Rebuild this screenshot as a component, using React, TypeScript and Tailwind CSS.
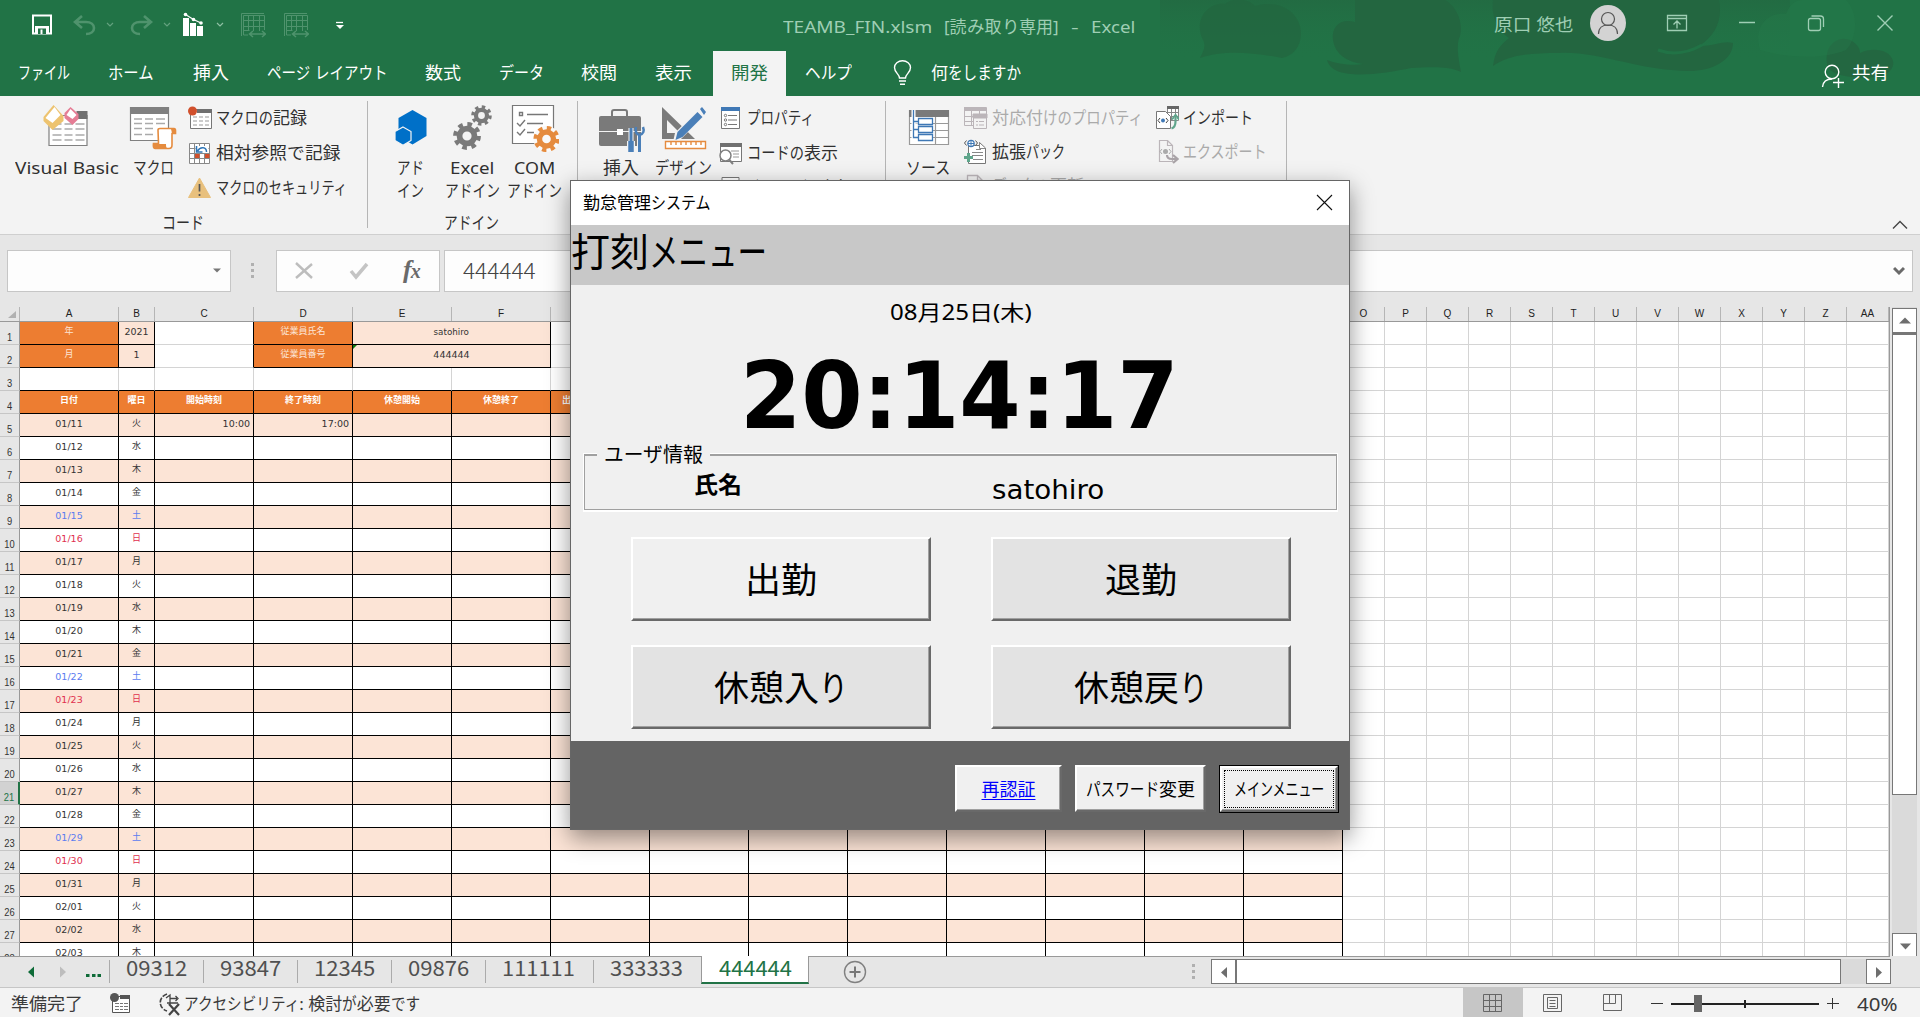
import { useLayoutEffect, useRef, useState, type ReactNode } from "react";

const kanaRun = /([\u3040-\u30ff]+)/;
const isKana = /^[\u3040-\u30ff]/;

/*
 * Single-line label set to an exact width. Kana are condensed and kanji keep
 * their full width; labels without kana are scaled as a whole.
 */
function Fit({ w, c = "", children }: { w: number; c?: string; children: ReactNode }) {
  const ref = useRef<HTMLSpanElement>(null);
  const runs: ReactNode[] = typeof children === "string" ? children.split(kanaRun).filter((r) => r !== "") : [children];
  const [fit, setFit] = useState<{ s: number; w: number }[]>([]);
  useLayoutEffect(() => {
    if (!ref.current) return;
    const widths = Array.from(ref.current.children).map((e) => (e.firstElementChild as HTMLElement).offsetWidth);
    const kana = runs.map((r) => typeof r === "string" && isKana.test(r));
    const total = widths.reduce((a, b) => a + b, 0);
    const kanaTotal = widths.reduce((a, b, i) => a + (kana[i] ? b : 0), 0);
    const ks = kanaTotal > 0 ? (w - (total - kanaTotal)) / kanaTotal : 0;
    const split = ks > 0.6 && ks < 1.15;
    setFit(
      widths.map((n, i) => {
        const s = split ? (kana[i] ? ks : 1) : w / total;
        return { s, w: n * s };
      }),
    );
  }, [w]);
  return (
    <span className={"block shrink-0 whitespace-nowrap " + c} style={{ width: w }}>
      <span ref={ref} className="flex">
        {runs.map((r, i) => (
          <span key={i} className="block shrink-0" style={{ width: fit[i]?.w }}>
            <span className="inline-block origin-left whitespace-pre align-top" style={{ transform: `scaleX(${fit[i]?.s ?? 1})` }}>
              {r}
            </span>
          </span>
        ))}
      </span>
    </span>
  );
}

function Pic({ x, y, w, h, c = "", children }: { x: number; y: number; w: number; h: number; c?: string; children: ReactNode }) {
  return (
    <svg className={"block shrink-0 " + c} width={w} height={h} viewBox={`${x} ${y} ${w} ${h}`} fill="none">
      {children}
    </svg>
  );
}

function Gear({ x, y, r, color }: { x: number; y: number; r: number; color: string }) {
  const seg = (2 * Math.PI * r) / 16;
  return (
    <g stroke={color} fill="none">
      <circle cx={x} cy={y} r={r * 0.65} strokeWidth={r * 0.5} />
      <circle cx={x} cy={y} r={r} strokeWidth={r * 0.42} strokeDasharray={`${seg} ${seg}`} />
    </g>
  );
}

function Chev({ c = "" }: { c?: string }) {
  return (
    <Pic x={0} y={0} w={8} h={6} c={c}>
      <path d="M1 1l3 3 3-3" stroke="#8fc0a4" strokeWidth="1.2" />
    </Pic>
  );
}

function TitleBar() {
  return (
    <div className="flex h-[51px] items-start">
      <Pic x={31} y={14} w={20} h={21} c="ml-[32px] mt-[14px]">
        <path d="M32 15.500h18v18H32z" stroke="#fff" strokeWidth="2" />
        <path d="M34 26h14v7H34z" fill="#fff" />
        <path d="M37 28.500h8V34h-8z" fill="#217346" />
        <path d="M39.500 29.500h2V34h-2z" fill="#fff" />
      </Pic>
      <Pic x={73} y={14} w={24} h={22} c="ml-[21px] mt-[14px]">
        <path d="M82 16l-7 6 7 6M76 22h10c5 0 8 2.500 8 6s-3 6-8 6" stroke="#4f936d" strokeWidth="2.600" />
      </Pic>
      <Chev c="ml-[9px] mt-[22px] opacity-60" />
      <Pic x={129} y={14} w={24} h={22} c="ml-[15px] mt-[14px]">
        <path d="M144 16l7 6-7 6M150 22h-10c-5 0-8 2.500-8 6s3 6 8 6" stroke="#4f936d" strokeWidth="2.600" />
      </Pic>
      <Chev c="ml-[10px] mt-[22px] opacity-60" />
      <Pic x={182} y={12} w={22} h={25} c="ml-[11px] mt-[12px]">
        <path d="M183 18h6v18h-6zM190 23h6v13h-6zM197 26h6v10h-6z" fill="#fff" />
        <path d="M185.500 14.500l8 5 7.500 3.500" stroke="#fff" strokeWidth="1.200" />
        <circle cx="185.500" cy="14.500" r="1.800" fill="#fff" />
        <circle cx="193.500" cy="19.500" r="1.800" fill="#fff" />
        <circle cx="201" cy="23" r="1.800" fill="#fff" />
      </Pic>
      <Chev c="ml-[12px] mt-[22px]" />
      {[0, 1].map((i) => (
        <Pic key={i} x={240} y={12} w={26} h={26} c={i ? "ml-[17px] mt-[12px]" : "ml-[16px] mt-[12px]"}>
          <g stroke="#4f936d" strokeWidth="1">
            <path d="M241.500 36V13.500H264M243.500 15.500h21V30M243.500 15.500V35H248M248.500 15.500V31M253.500 15.500V31M259.500 15.500V31M243.500 20.500h21M243.500 26.500h21M243.500 30.500h6" />
            <path d="M250 34h15M253 31l-3.500 3 3.500 3M262 31l3.500 3-3.500 3" strokeWidth="1.500" />
          </g>
        </Pic>
      ))}
      <Pic x={335} y={20} w={10} h={10} c="ml-[26px] mt-[20px]">
        <path d="M336 22.500h7" stroke="#fff" strokeWidth="1.300" />
        <path d="M336 25h8l-4 4z" fill="#fff" />
      </Pic>
      <div className="ml-[438px] mt-[14px] flex text-[17px] leading-[26px] text-[#9fceb4]">
        <Fit w={149}>TEAMB_FIN.xlsm</Fit>
        <Fit w={115} c="ml-[12px]">[読み取り専用]</Fit>
        <Fit w={7} c="ml-[12px]">-</Fit>
        <Fit w={44} c="ml-[13px]">Excel</Fit>
      </div>
      <Fit w={79} c="ml-[359px] mt-[12px] text-[17px] leading-[26px] text-[#9fceb4]">原口 悠也</Fit>
      <Pic x={1590} y={5} w={36} h={36} c="ml-[17px] mt-[5px]">
        <circle cx="1608" cy="23" r="18" fill="#d3d3d3" />
        <circle cx="1608" cy="19" r="6.500" stroke="#555" strokeWidth="1.200" />
        <path d="M1598.500 34c0-6 4-9 9.500-9s9.500 3 9.500 9" stroke="#555" strokeWidth="1.200" />
      </Pic>
      <Pic x={1666} y={14} w={22} h={18} c="ml-[40px] mt-[14px]">
        <path d="M1667.500 15.500h19v15h-19zM1667.500 18.500h19M1677 28.500v-7.500M1673.500 24.500l3.500-3.500 3.500 3.500" stroke="#9fceb4" strokeWidth="1.300" />
      </Pic>
      <Pic x={1739} y={14} w={16} h={18} c="ml-[51px] mt-[14px]">
        <path d="M1739 22.500h16" stroke="#9fceb4" strokeWidth="1.500" />
      </Pic>
      <Pic x={1807} y={14} w={18} h={18} c="ml-[52px] mt-[14px]">
        <rect x="1808.500" y="18.500" width="12" height="12" rx="2" stroke="#9fceb4" strokeWidth="1.300" />
        <path d="M1811.500 16h9c2 0 3 1 3 3v8" stroke="#9fceb4" strokeWidth="1.300" />
      </Pic>
      <Pic x={1876} y={14} w={18} h={18} c="ml-[51px] mt-[14px]">
        <path d="M1877.500 15.500l15 15M1892.500 15.500l-15 15" stroke="#9fceb4" strokeWidth="1.400" />
      </Pic>
    </div>
  );
}

function Tabs() {
  return (
    <div className="flex h-[45px] text-[17px] leading-[44px] text-white">
      <Fit w={52} c="ml-[18px]">ファイル</Fit>
      <Fit w={46} c="ml-[38px]">ホーム</Fit>
      <Fit w={36} c="ml-[39px]">挿入</Fit>
      <Fit w={120} c="ml-[38px]">ページ レイアウト</Fit>
      <Fit w={36} c="ml-[38px]">数式</Fit>
      <Fit w={45} c="ml-[38px]">データ</Fit>
      <Fit w={36} c="ml-[37px]">校閲</Fit>
      <Fit w={37} c="ml-[38px]">表示</Fit>
      <div className="ml-[21px] flex w-[73px] justify-center bg-[#f3f3f3] text-[#217346]">
        <Fit w={37}>開発</Fit>
      </div>
      <Fit w={47} c="ml-[19px]">ヘルプ</Fit>
      <Pic x={893} y={60} w={20} h={26} c="ml-[41px] mt-[9px]">
        <path d="M899.500 78c0-4-5-5-5-10.500a8 6.800 0 0 1 16 0c0 5.500-5 6.500-5 10.500z" stroke="#fff" strokeWidth="1.400" />
        <path d="M899 81h7M900 84.300h5" stroke="#fff" strokeWidth="1.400" />
      </Pic>
      <Fit w={90} c="ml-[18px]">何をしますか</Fit>
      <Pic x={1821} y={64} w={24} h={25} c="ml-[800px] mt-[13px]">
        <circle cx="1832" cy="72" r="6.800" stroke="#fff" strokeWidth="1.400" />
        <path d="M1822.500 87c.5-5 4-8 9.500-8M1838.500 78v10M1833 82.500h11" stroke="#fff" strokeWidth="1.400" />
      </Pic>
      <Fit w={37} c="ml-[7px]">共有</Fit>
    </div>
  );
}

function Header() {
  return (
    <header className="relative h-[96px] shrink-0 bg-[#217346]">
      <svg className="absolute left-0 top-0" width="1920" height="96" viewBox="0 0 1920 96">
        <defs>
          <linearGradient id="hz" x1="0" x2="0" y1="0" y2="1">
            <stop offset="0" stopColor="#236640" stopOpacity=".6" />
            <stop offset="1" stopColor="#217346" stopOpacity="0" />
          </linearGradient>
        </defs>
        <path d="M1160 0H1790V60H1160z" fill="url(#hz)" />
        <g fill="#236640">
          <path d="M1200 58c4-8 6-12 3-18-10-20 5-38 22-36 10-8 25-4 30 2 20-6 40 2 45 20 4 18-6 30-18 32-30-6-60-8-82 0z" opacity=".8" />
          <path d="M1333 40c-2-14 8-22 22-18V0h90c14 8 18 26 15 36-4 8-2 20 1 36-12-6-30-5-50-4-30 6-78 14-84-8 10 4 26 6 36 4-16-2-28-10-30-24z" />
          <path d="M1493 66c2-14 6-20 16-28-12-8-18-22-16-38h226c4 20-4 36-20 46 14 0 26-6 34-3 0 18-22 28-44 28-50 0-90-20-130-18-30 0-50 2-66 13z" />
          <path d="M1828 67c-6-20 10-34 24-26 6 4 8 8 8 12 12-6 30-4 33 8 2 8-6 14-16 16-18 2-44 0-49-10z" opacity=".9" />
        </g>
        <path d="M1658 50c14 5 30 3 44-5" stroke="#217346" strokeWidth="3" fill="none" />
        <path d="M1760 50c-6-20 4-38 26-36 4-10 10-14 16-14h44c14 14 10 40 0 50-24 10-60 8-86 0z" fill="#267a4c" opacity=".4" />
      </svg>
      <div className="relative">
        <TitleBar />
        <Tabs />
      </div>
    </header>
  );
}

function Big({ c, icon, lines }: { c: string; icon: ReactNode; lines: [string, number][] }) {
  return (
    <div className={"flex shrink-0 flex-col items-center pt-[8px] leading-[23px] " + c}>
      {icon}
      <div className="mt-[4px] flex flex-col items-center">
        {lines.map(([t, w]) => (
          <Fit key={t} w={w}>{t}</Fit>
        ))}
      </div>
    </div>
  );
}

function Small({ icon, text, w, c }: { icon: ReactNode; text: string; w: number; c: string }) {
  return (
    <div className={"flex items-center " + c}>
      <div className="flex w-[24px] shrink-0 justify-center">{icon}</div>
      <Fit w={w} c="ml-[4px]">{text}</Fit>
    </div>
  );
}

function Sep() {
  return <div className="mt-[5px] h-[127px] w-px shrink-0 bg-[#b5b5b5]" />;
}

function Ribbon() {
  return (
    <div className="flex h-[139px] shrink-0 border-b border-[#cfcfcf] bg-[#f3f3f3] text-[17px] text-[#303030]">
      <div className="flex w-[367px] shrink-0 flex-col">
        <div className="flex h-[115px]">
          <Big
            c="ml-[5px] w-[123px]"
            lines={[["Visual Basic", 104]]}
            icon={
              <Pic x={41.5} y={104} w={50} h={48}>
                <path d="M48.500 115.500h38v30h-38z" fill="#fff" stroke="#808080" strokeWidth="1.200" />
                <path d="M76 111h11v8H76z" fill="#707070" />
                <path d="M52 124h9M64 124h8M75 124h9M52 129h9M64 129h8M75 129h9M52 135h9M64 135h8M75 135h9M52 140h9M64 140h8M75 140h9" stroke="#aaa" strokeWidth="1.300" />
                <path d="M53 105l10 11v5l-11 9-9-9v-4z" fill="#edc36f" />
                <path d="M54 107l6 8-8 8-7-5z" fill="#fff" />
                <path d="M70 107l8 7v5l-6 6-8-7v-5z" fill="#e57d95" />
                <path d="M70 109l6 6-4 4-6-4z" fill="#fff" />
              </Pic>
            }
          />
          <Big
            c="w-[50px]"
            lines={[["マクロ", 41]]}
            icon={
              <Pic x={128} y={104} w={50} h={48}>
                <path d="M130.500 107.500h38v33h-38z" fill="#fff" stroke="#808080" strokeWidth="1.200" />
                <path d="M130 107h39v7h-39z" fill="#808080" />
                <path d="M134 119h8M145 119h8M156 119h9M134 123.500h8M145 123.500h8M156 123.500h9M134 128.500h8M145 128.500h8M134 134.500h8M145 134.500h8" stroke="#aaa" strokeWidth="1.300" />
                <path d="M158 130c0-1 1-1.500 2-1.500h14c1 0 1.500 1 1.500 2v3H172V145c0 2-1 3.500-3 3.500h-14c-1.500 0-2-2-1.500-5h5z" fill="#fff" stroke="#e58b3e" strokeWidth="1.600" />
                <path d="M154 144h12c0 2 0 4 2 5h-12c-2 0-3-3-2-5zM171 129h4v4h-3z" fill="#e58b3e" />
              </Pic>
            }
          />
          <div className="ml-[10px] mt-[4px] flex flex-col">
            <Small
              c="h-[35px]" text="マクロの記録" w={91}
              icon={
                <Pic x={0} y={0} w={24} h={24}>
                  <path d="M2.500 3.500h21v19h-21z" fill="#fff" stroke="#777" />
                  <path d="M9 3h15v4H9z" fill="#707070" />
                  <path d="M5 11h4M11 11h4M17 11h4M5 15h4M11 15h4M17 15h4M5 19h4M11 19h4M17 19h4" stroke="#999" />
                  <circle cx="4.500" cy="5" r="4.500" fill="#d1502c" />
                </Pic>
              }
            />
            <Small
              c="h-[35px]" text="相対参照で記録" w={124}
              icon={
                <Pic x={1} y={0} w={24} h={24}>
                  <path d="M2.500 2.500h20v20h-20zM7.500 2.500v20M12.500 2.500v20M17.500 2.500v20M2.500 7.500h20M2.500 12.500h20M2.500 17.500h20" fill="#fff" stroke="#888" />
                  <path d="M8.500 5h13v7h-13z" fill="#fff" />
                  <path d="M8 13h4.500v4H8zM18 13h4.500v4H18z" fill="#d1502c" />
                  <path d="M19.500 11c0-5-6-6-9-1M9.500 5v6h6" stroke="#2e75b6" strokeWidth="1.500" />
                </Pic>
              }
            />
            <Small
              c="h-[35px]" text="マクロのセキュリティ" w={131}
              icon={
                <Pic x={0} y={0} w={24} h={24}>
                  <path d="M11.500 2l11 19.500H.5z" fill="#e8c07d" stroke="#e8c07d" strokeLinejoin="round" />
                  <path d="M11.500 8v7.500M11.500 18v2" stroke="#555" strokeWidth="1.700" />
                </Pic>
              }
            />
          </div>
        </div>
        <Fit w={42} c="ml-[162px] leading-[23px]">コード</Fit>
      </div>
      <Sep />
      <div className="flex w-[209px] shrink-0 flex-col">
        <div className="ml-[12px] flex h-[115px]">
          <Big
            c="w-[61px]"
            lines={[["アド", 27], ["イン", 27]]}
            icon={
              <Pic x={386} y={104} w={50} h={48}>
                <path d="M412.500 110l14 8v18l-14 8.500-14-8.500v-18z" fill="#0070c8" />
                <path d="M403 127l8 4.500v9l-8 4.800-8-4.800v-9z" fill="#0070c8" stroke="#f3f3f3" strokeWidth="1.200" />
              </Pic>
            }
          />
          <Big
            c="w-[62px]"
            lines={[["Excel", 44], ["アドイン", 55]]}
            icon={
              <Pic x={447} y={104} w={50} h={48}>
                <Gear x={467} y={136} r={11.5} color="#7a7a7a" />
                <Gear x={481.5} y={115.5} r={8.5} color="#7a7a7a" />
              </Pic>
            }
          />
          <Big
            c="w-[62px]"
            lines={[["COM", 41], ["アドイン", 55]]}
            icon={
              <Pic x={509} y={104} w={50} h={48}>
                <path d="M512.500 105.500h41v38h-41z" fill="#fff" stroke="#777" strokeWidth="1.200" />
                <path d="M519.500 112.500h3v3h-3zM527 114.500h21M527 123.500h16M527 132.500h7M517 123l3 3 5-6M517 132l3 3 5-6" stroke="#777" strokeWidth="1.400" />
                <circle cx="546.500" cy="139" r="13" fill="#f9f9f9" />
                <Gear x={546.5} y={139} r={10.8} color="#e58b3e" />
              </Pic>
            }
          />
        </div>
        <Fit w={55} c="ml-[76px] leading-[23px]">アドイン</Fit>
      </div>
      <Sep />
      <div className="flex w-[307px] shrink-0">
        <Big
          c="ml-[12px] w-[62px]"
          lines={[["挿入", 36]]}
          icon={
            <Pic x={597} y={104} w={50} h={48}>
              <path d="M613 116v-4c0-1.500 1-2 2-2h11c1 0 2 .5 2 2v4" stroke="#7a7a7a" strokeWidth="2" />
              <rect x="600" y="116" width="42" height="30" rx="2" fill="#7a7a7a" />
              <path d="M600 131.500h42" stroke="#f3f3f3" />
              <path d="M618 129h6v6h-6z" fill="#fff" />
              <path d="M632 128v14M640.500 135v17" stroke="#f3f3f3" strokeWidth="5" />
              <path d="M632 141v11" stroke="#f3f3f3" strokeWidth="8" />
              <path d="M632 128v14M640.500 135v17" stroke="#4a7fb8" strokeWidth="3" />
              <path d="M632 141v11" stroke="#4a7fb8" strokeWidth="5.500" />
              <path d="M637 127c-1 4 0 7 3.500 8 4-1 5-4 3.500-8" stroke="#4a7fb8" strokeWidth="2.500" />
            </Pic>
          }
        />
        <Big
          c="w-[62px]"
          lines={[["デザイン", 57]]}
          icon={
            <Pic x={658} y={104} w={50} h={48}>
              <path d="M662 107l33 32h-33zm5 13v13h13z" fill="#7a7a7a" fillRule="evenodd" />
              <path d="M699 108l7 6-25 25-8 3 2-9z" fill="#f3f3f3" />
              <path d="M697.500 112l5 5-20 20-7 3 2-8zM700 109l2-2 4 5-2 3z" fill="#4a7fb8" />
              <path d="M665.500 141.500h40v7h-40zM671 142v3M676 142v3M681 142v3M686 142v3M691 142v3M696 142v3M701 142v3" fill="#fff" stroke="#e58b3e" strokeWidth="1.400" />
            </Pic>
          }
        />
        <div className="ml-[5px] mt-[4px] flex flex-col">
          <Small
            c="h-[35px]" text="プロパティ" w={67}
            icon={
              <Pic x={0} y={0} w={20} h={24}>
                <path d="M.5 1.500h18v21H.5z" fill="#fff" stroke="#777" />
                <path d="M0 1h19v4H0z" fill="#3f78b5" />
                <circle cx="4.500" cy="9.500" r="1.200" stroke="#777" />
                <circle cx="4.500" cy="14" r="1.200" stroke="#777" />
                <circle cx="4.500" cy="18.500" r="1.200" stroke="#777" />
                <path d="M7 9.500h9M7 14h9M7 18.500h9" stroke="#777" />
              </Pic>
            }
          />
          <Small
            c="h-[35px]" text="コードの表示" w={91}
            icon={
              <Pic x={0} y={0} w={24} h={24}>
                <path d="M1.500 2.500h21v18h-21z" fill="#fff" stroke="#777" />
                <path d="M1 2h22v4H1z" fill="#707070" />
                <path d="M12 10h8M14 13h6M14 16h6" stroke="#999" />
                <circle cx="6.500" cy="14.500" r="5.500" fill="#fff" stroke="#808080" strokeWidth="1.500" />
                <path d="M10 18.500l4 4.500" stroke="#808080" strokeWidth="2" />
              </Pic>
            }
          />
          <Small
            c="h-[35px]" text="ダイアログの実行" w={106}
            icon={
              <Pic x={0} y={0} w={20} h={24}>
                <path d="M1 1.500h17v20H1zM7 6h5M9.500 4v5" fill="#fff" stroke="#777" />
              </Pic>
            }
          />
        </div>
      </div>
      <Sep />
      <div className="flex w-[400px] shrink-0">
        <Big
          c="ml-[12px] w-[60px]"
          lines={[["ソース", 44]]}
          icon={
            <Pic x={903} y={104} w={50} h={48}>
              <path d="M909.500 110.500h39v34h-39zM909.500 123.500h39M909.500 130.500h39M909.500 137.500h39M935.500 116v28" fill="#fff" stroke="#999" strokeWidth="1.200" />
              <path d="M909 110h40v7h-40z" fill="#7a7a7a" />
              <path d="M913.500 110v31.500h5M913.500 121.500h5M913.500 129.500h5" stroke="#fff" strokeWidth="4" />
              <path d="M913.500 110v27.500h5M913.500 121.500h5M913.500 129.500h5" stroke="#3f78b5" strokeWidth="1.300" />
              <path d="M918.500 118.500h14v6h-14zM918.500 126.500h14v6h-14zM918.500 134.500h14v6h-14z" fill="#fff" stroke="#3f78b5" strokeWidth="1.300" />
            </Pic>
          }
        />
        <div className="ml-[6px] mt-[5px] flex w-[191px] flex-col">
          <Small
            c="h-[34px] text-[#aaa]" text="対応付けのプロパティ" w={151}
            icon={
              <Pic x={0} y={0} w={24} h={24}>
                <path d="M.5 1.500h22v18H.5zM.5 10.500h22M.5 15.500h22M7.500 5v14M15.500 5v14" stroke="#bbb5b9" />
                <path d="M0 1h22v4H0z" fill="#bbb5b9" />
                <path d="M9.500 8.500h13v14h-13z" fill="#f3f3f3" stroke="#bbb5b9" />
                <path d="M9 8h14v4H9zM12 15.500h2M15 15.500h5M12 19h2M15 19h5" fill="#bbb5b9" stroke="#bbb5b9" />
              </Pic>
            }
          />
          <Small
            c="h-[34px]" text="拡張パック" w={73}
            icon={
              <Pic x={0} y={0} w={24} h={26}>
                <path d="M4.500 6.500h11V3.500l6 5.500v15.500h-17z" fill="#fff" stroke="#777" />
                <path d="M15.500 3.500v6h6M12 10.500h5M8 13.500h11M8 16.500h11M9 20.500h10" stroke="#888" />
                <path d="M2.500 1.500l-2 2.500 2 2.500M11.500 1.500l2 2.500-2 2.500" stroke="#555" />
                <circle cx="7" cy="4.500" r="3.200" fill="#fff" stroke="#3f78b5" strokeWidth="1.200" />
                <path d="M4 4.500h6M7 1.500v6" stroke="#3f78b5" />
                <path d="M0 18.500h9M4.500 14v9" stroke="#5fa58b" strokeWidth="3" />
              </Pic>
            }
          />
          <Small
            c="h-[34px] text-[#aaa]" text="データの更新" w={92}
            icon={
              <Pic x={0} y={0} w={24} h={24}>
                <path d="M3.500 1.500h10l5 5v15h-15zM13.500 1.500v5h5M20.500 6v12" stroke="#bbb5b9" strokeWidth="1.300" />
              </Pic>
            }
          />
        </div>
        <div className="mt-[5px] flex flex-col">
          <Small
            c="h-[34px]" text="インポート" w={70}
            icon={
              <Pic x={-1} y={0} w={24} h={24}>
                <path d="M11.500 1.500h11v13h-11zM15.500 1.500v13M19.500 1.500v13M11.500 6.500h11M11.500 10.500h11" fill="#fff" stroke="#888" />
                <path d="M11 0h12v3H11z" fill="#666" />
                <path d="M.5 5.500h9l5 5v12H.5z" fill="#fff" stroke="#777" />
                <path d="M4 12l-2 2.500 2 2.500M10 12l2 2.500-2 2.500" stroke="#444" />
                <circle cx="7" cy="14.500" r="2" fill="#3f78b5" />
                <path d="M15.500 22.500c3-1 4-3 4-7v-4" stroke="#5fa58b" strokeWidth="2.200" />
                <path d="M16 13.500l3.500-4.500 3.500 4.500" stroke="#5fa58b" strokeWidth="2" />
              </Pic>
            }
          />
          <Small
            c="h-[34px] text-[#aaa]" text="エクスポート" w={84}
            icon={
              <Pic x={0} y={0} w={24} h={24}>
                <path d="M4.500.5h8l5 5v16h-13zM12.500.5v5h5" stroke="#bbb5b9" strokeWidth="1.200" />
                <path d="M7 9l-2 2.500L7 14M14 9l2 2.500-2 2.500" stroke="#aaa" />
                <circle cx="10.500" cy="11.500" r="2.500" fill="#aaa" />
                <path d="M12 15c0 3 2 4 5 4h4M18 15l4.500 4-4.500 4" stroke="#a9a3a7" strokeWidth="2.200" />
              </Pic>
            }
          />
        </div>
      </div>
      <Sep />
      <Pic x={0} y={0} w={18} h={12} c="ml-[604px] mt-[123px]">
        <path d="M2 9.500l7-7 7 7" stroke="#444" strokeWidth="1.400" />
      </Pic>
    </div>
  );
}

function Dots({ c }: { c: string }) {
  return (
    <div className={"flex shrink-0 flex-col gap-[3px] " + c}>
      <div className="size-[3px] bg-[#b0b0b0]" />
      <div className="size-[3px] bg-[#b0b0b0]" />
      <div className="size-[3px] bg-[#b0b0b0]" />
    </div>
  );
}

function FormulaBar() {
  return (
    <div className="flex h-[72px] shrink-0 bg-[#e6e6e6] pt-[15px]">
      <div className="ml-[7px] flex h-[42px] w-[224px] items-center justify-end border border-[#c6c6c6] bg-[#fdfdfd] pr-[9px]">
        <Pic x={0} y={0} w={8} h={6}>
          <path d="M0 .5h8l-4 4z" fill="#777" />
        </Pic>
      </div>
      <Dots c="ml-[20px] mt-[13px]" />
      <div className="ml-[22px] flex h-[42px] w-[164px] items-center border border-[#c6c6c6] bg-[#fdfdfd]">
        <Pic x={0} y={0} w={20} h={18} c="ml-[17px]">
          <path d="M2 1l16 15M18 2L2 16" stroke="#bdbdbd" strokeWidth="2.400" />
        </Pic>
        <Pic x={0} y={0} w={20} h={18} c="ml-[35px]">
          <path d="M2 9l5 6L18 2" stroke="#c4c4c4" strokeWidth="3.500" />
        </Pic>
        <span className="ml-[34px] whitespace-nowrap pb-[3px] font-['Liberation_Serif',serif] text-[26px] font-bold italic leading-none tracking-[-1px] text-[#6a6a6a]">
          f<span className="text-[20px]">x</span>
        </span>
      </div>
      <div className="ml-[4px] flex h-[42px] w-[1469px] items-center border border-[#c6c6c6] bg-[#fdfdfd]">
        <Fit w={73} c="ml-[18px] flex-none pb-[4px] font-['Noto_Sans_CJK_JP',sans-serif] text-[22px] font-light leading-[34px] text-[#444]">444444</Fit>
        <Pic x={0} y={0} w={12} h={10} c="ml-auto mr-[7px]">
          <path d="M1 2l5 5 5-5" stroke="#6a6a6a" strokeWidth="3" />
        </Pic>
      </div>
    </div>
  );
}

const letters = ["A", "B", "C", "D", "E", "F", "G", "H", "I", "J", "K", "L", "M", "N"];
const tailLetters = ["O", "P", "Q", "R", "S", "T", "U", "V", "W", "X", "Y", "Z", "AA"];
const week = ["火", "水", "木", "金", "土", "日", "月"];
const wide = [2, 3, 4, 5, 6, 7, 8, 9, 10, 11, 12, 13];
const headings = ["開始時刻", "終了時刻", "休憩開始", "休憩終了"];
const days = Array.from({ length: 24 }, (_, i) => {
  const d = 11 + i;
  return { date: d > 31 ? "02/0" + (d - 31) : "01/" + d, day: week[i % 7] };
});

const B = "border-b border-r border-black ";
const G = "border-b border-r border-[#d4d4d4] ";

function Cell({ c, children }: { c: string; children?: ReactNode }) {
  return <div className={"h-[23px] shrink-0 overflow-hidden whitespace-nowrap text-center leading-[19px] " + c}>{children}</div>;
}

function Row({ n, children }: { n: number; children: ReactNode }) {
  return (
    <div className="flex h-[23px] shrink-0">
      <div
        className={
          n === 21
            ? "w-[20px] shrink-0 overflow-hidden border-b border-r-2 border-b-[#c0c0c0] border-r-[#217346] bg-[#d2d2d2] pt-[5px] text-center text-[11px] text-[#217346]"
            : "w-[20px] shrink-0 overflow-hidden border-b border-r border-b-[#c6c6c6] border-r-[#999] bg-[#e6e6e6] pt-[5px] text-center text-[11px] text-[#333]"
        }
      >
        <span className="block scale-x-85 font-['Liberation_Sans',sans-serif] leading-[20px]">{n}</span>
      </div>
      {children}
    </div>
  );
}

function Tail() {
  return tailLetters.map((l) => <Cell key={l} c={G + "w-[42px]"} />);
}

function Sheet() {
  return (
    <div className="flex w-[1890px] shrink-0 flex-col overflow-hidden border-r border-[#999] bg-white font-['DejaVu_Sans','Noto_Sans_CJK_JP',sans-serif] text-[9.5px] text-[#333]">
      <div className="flex h-[15px] shrink-0 border-b border-[#999] bg-[#e6e6e6] font-['Liberation_Sans',sans-serif] text-[10px] leading-[14px] text-[#222]">
        <div className="flex w-[20px] shrink-0 justify-end border-r border-[#b5b5b5] pr-[3px] pt-[4px]">
          <Pic x={0} y={0} w={8} h={8}>
            <path d="M8 0v7H0z" fill="#b1b1b1" />
          </Pic>
        </div>
        {letters.map((l) => (
          <div key={l} className={l === "B" ? "w-[36px] shrink-0 border-r border-[#b5b5b5] text-center" : "w-[99px] shrink-0 border-r border-[#b5b5b5] text-center"}>{l}</div>
        ))}
        {tailLetters.map((l) => (
          <div key={l} className="w-[42px] shrink-0 border-r border-[#b5b5b5] text-center">{l}</div>
        ))}
      </div>
      {[
        ["年", "2021", "従業員氏名", "satohiro"],
        ["月", "1", "従業員番号", "444444"],
      ].map((r, i) => (
        <Row key={i} n={i + 1}>
          <Cell c={B + "w-[99px] bg-[#ed7d31] text-[9px] text-[#fce4d6]"}>{r[0]}</Cell>
          <Cell c={B + "w-[36px] bg-[#fce4d6]"}>{r[1]}</Cell>
          <Cell c="w-[99px] border-b border-r border-b-[#d4d4d4] border-r-black" />
          <Cell c={B + "w-[99px] bg-[#ed7d31] text-[9px] text-[#fce4d6]"}>{r[2]}</Cell>
          <Cell c={B + "relative w-[198px] bg-[#fce4d6]"}>
            {i === 0 ? <span className="inline-block scale-x-92">{r[3]}</span> : r[3]}
            {i === 1 && <span className="absolute left-0 top-0 border-r-4 border-t-4 border-r-transparent border-t-[#107c10]" />}
          </Cell>
          {wide.slice(4).map((k) => <Cell key={k} c={G + "w-[99px]"} />)}
          <Tail />
        </Row>
      ))}
      <Row n={3}>
        {letters.map((l) => (
          <Cell key={l} c={l === "B" ? "w-[36px] border-b border-r border-b-black border-r-[#d4d4d4]" : "w-[99px] border-b border-r border-b-black border-r-[#d4d4d4]"} />
        ))}
        <Tail />
      </Row>
      <Row n={4}>
        <Cell c={B + "w-[99px] bg-[#ed7d31] text-[9px] font-bold text-white"}>日付</Cell>
        <Cell c={B + "w-[36px] bg-[#ed7d31] text-[9px] font-bold text-white"}>曜日</Cell>
        {wide.map((k) => (
          <Cell key={k} c={B + (k === 6 ? "w-[99px] bg-[#ed7d31] pl-[11px] text-[9px] font-bold text-white" : "w-[99px] bg-[#ed7d31] text-[9px] font-bold text-white")}>
            {k === 6 ? <span className="block text-left">出勤時間</span> : headings[k - 2]}
          </Cell>
        ))}
        <Tail />
      </Row>
      {days.map((d, i) => {
        const bg = i % 2 === 0 ? "bg-[#fce4d6] " : "bg-white ";
        const fg = d.day === "土" ? "text-[#5b7cf0] " : d.day === "日" ? "text-[#e0304e] " : "";
        return (
          <Row key={i} n={i + 5}>
            <Cell c={B + bg + fg + "w-[99px]"}>{d.date}</Cell>
            <Cell c={B + bg + fg + "w-[36px] text-[9px]"}>{d.day}</Cell>
            {wide.map((k) => (
              <Cell key={k} c={B + bg + "w-[99px]"}>
                {i === 0 && k < 4 && <span className="block pr-[3px] text-right">{k === 2 ? "10:00" : "17:00"}</span>}
              </Cell>
            ))}
            <Tail />
          </Row>
        );
      })}
    </div>
  );
}

function Arrow({ d }: { d: string }) {
  return (
    <Pic x={0} y={0} w={12} h={12}>
      <path d={d} fill="#6e6e6e" />
    </Pic>
  );
}

function VScroll() {
  return (
    <div className="ml-[2px] flex w-[25px] shrink-0 flex-col bg-[#dadada]">
      <div className="mt-[1px] flex h-[25px] shrink-0 items-center justify-center border border-[#777] bg-white">
        <Arrow d="M0 8.500l6-6 6 6z" />
      </div>
      <div className="h-[462px] shrink-0 border border-t-2 border-[#777] bg-white" />
      <div className="-mb-[2px] mt-auto flex h-[25px] shrink-0 items-center justify-center border border-[#777] bg-white">
        <Arrow d="M1 3.500h11l-5.500 6z" />
      </div>
    </div>
  );
}

const sheetTabs: [string, number, string][] = [
  ["09312", 61, "w-[94px]"],
  ["93847", 61, "w-[94px]"],
  ["12345", 61, "w-[94px]"],
  ["09876", 61, "w-[94px]"],
  ["111111", 73, "w-[108px]"],
  ["333333", 73, "w-[107px]"],
];

function BottomBar() {
  return (
    <div className="flex h-[32px] shrink-0 border-b border-[#c6c6c6] bg-[#e6e6e6]">
      <div className="flex h-[31px] w-[701px] shrink-0 border-t border-[#999] font-['Noto_Sans_CJK_JP',sans-serif] text-[21px] leading-[20px] text-[#505050]">
        <Pic x={27} y={956} w={82} h={30} c="ml-[27px]">
          <path d="M34 965.500v11l-6-5.500z" fill="#0e6b38" />
          <path d="M60 965.500v11l6-5.500z" fill="#bdbdbd" />
          <path d="M86 973h3.500v3H86zM92 973h3.500v3H92zM97.500 973h3.500v3h-3.500z" fill="#0e6b38" />
        </Pic>
        {sheetTabs.map(([t, w, c]) => (
          <div key={t} className={"flex shrink-0 " + c}>
            <div className="mt-[3px] h-[23px] w-px bg-[#ababab]" />
            <Fit w={w} c="ml-[16px]">{t}</Fit>
          </div>
        ))}
      </div>
      <div className="flex h-[28px] w-[108px] shrink-0 justify-center border-x border-b-2 border-x-[#999] border-b-[#217346] bg-white font-['Noto_Sans_CJK_JP',sans-serif] text-[21px] leading-[22px] text-[#217346]">
        <Fit w={73}>444444</Fit>
      </div>
      <div className="flex h-[31px] w-[1081px] shrink-0 border-t border-[#999]">
        <Pic x={843} y={960} w={24} h={24} c="ml-[34px] mt-[3px]">
          <circle cx="855" cy="972" r="10.500" stroke="#808080" strokeWidth="1.400" />
          <path d="M855 966.500v11M849.500 972h11" stroke="#777" strokeWidth="2" />
        </Pic>
        <Dots c="ml-[325px] mt-[7px]" />
        <div className="ml-[16px] mt-[2px] flex h-[25px] w-[680px] shrink-0 bg-[#dadada]">
          <div className="flex w-[25px] items-center justify-center border border-[#777] bg-white">
            <Arrow d="M9 1v11L3 6.500z" />
          </div>
          <div className="w-[605px] border border-[#777] bg-white" />
          <div className="ml-auto flex w-[25px] items-center justify-center border border-[#777] bg-white">
            <Arrow d="M3 1v11l6-5.500z" />
          </div>
        </div>
      </div>
    </div>
  );
}

function StatusBar() {
  return (
    <div className="flex h-[29px] shrink-0 items-center bg-[#f3f3f3] text-[17px] leading-[29px] text-[#3a3a3a]">
      <Fit w={72} c="ml-[11px] mt-[2px]">準備完了</Fit>
      <Pic x={110} y={993} w={20} h={20} c="ml-[27px]">
        <path d="M112.500 996.500h17v16h-17z" fill="#fff" stroke="#555" />
        <path d="M120 995h10v4h-10z" fill="#555" />
        <path d="M115 1003.500h4M120 1003.500h3M124 1003.500h4M115 1006.500h4M120 1006.500h3M124 1006.500h4M115 1009.500h4M120 1009.500h3M124 1009.500h4" stroke="#777" />
        <circle cx="114.500" cy="997.500" r="4.500" fill="#555" />
      </Pic>
      <Pic x={158} y={993} w={24} h={24} c="ml-[28px] mt-[2px]">
        <path d="M167 995c-9 3-9 14 0 17" stroke="#444" strokeWidth="1.600" strokeDasharray="5 1.500" />
        <path d="M166 999l4-3v9M170 999.500h7M167 1004h11M175.500 997l2.500 2.500-2.500 2.500" stroke="#444" strokeWidth="1.300" />
        <path d="M169 1005l10 11M179 1005l-10 11" stroke="#444" strokeWidth="2.200" />
      </Pic>
      <Fit w={236} c="ml-[2px] mt-[2px]">アクセシビリティ: 検討が必要です</Fit>
      <div className="ml-auto flex h-[29px] w-[60px] items-center justify-center bg-[#c6c6c6]">
        <Pic x={0} y={0} w={20} h={20}>
          <path d="M.5 1.500h18v17H.5zM6.500 1.500v17M12.500 1.500v17M.5 7.500h18M.5 13.500h18" stroke="#666" />
        </Pic>
      </div>
      <div className="flex w-[60px] justify-center">
        <Pic x={0} y={0} w={20} h={20}>
          <path d="M.5 1.500h18v17H.5zM4.500 4.500h10v11h-10zM6.500 7.500h6M6.500 10.500h6M6.500 13.500h6" stroke="#666" />
        </Pic>
      </div>
      <div className="flex w-[60px] justify-center">
        <Pic x={0} y={0} w={20} h={20}>
          <path d="M.5 1.500h18v16H.5zM6.500 1.500v9M12.500 1.500v9M.5 10.500h12" stroke="#666" />
        </Pic>
      </div>
      <Pic x={1650} y={988} w={190} h={29} c="ml-[7px]">
        <path d="M1651 1003.500h12M1827 1003.500h12M1832.500 998v11" stroke="#333" strokeWidth="1" />
        <path d="M1671 1004h148" stroke="#222" strokeWidth="2" />
        <path d="M1745 1000v8" stroke="#222" strokeWidth="2" />
        <path d="M1694 995h8v17h-8z" fill="#666" />
      </Pic>
      <Fit w={41} c="ml-[17px] mr-[22px] mt-[3px] text-[18px]">40%</Fit>
    </div>
  );
}

const face = "flex items-center justify-center border-b-2 border-l-2 border-r-2 border-t-2 border-b-[#696969] border-l-white border-r-[#696969] border-t-white shadow-[inset_-1px_-1px_0_#a0a0a0] ";

function Dialog() {
  return (
    <div className="absolute left-[570px] top-[180px] flex h-[650px] w-[780px] flex-col border border-[#666] bg-[#f0f0f0] text-black shadow-[0_8px_22px_rgba(0,0,0,0.42)]">
      <div className="flex h-[44px] shrink-0 items-center bg-white">
        <Fit w={128} c="ml-[12px] text-[17px] leading-[42px]">勤怠管理システム</Fit>
        <Pic x={0} y={0} w={17} h={17} c="mb-[2px] ml-auto mr-[16px]">
          <path d="M1 1l15 15M16 1L1 16" stroke="#111" strokeWidth="1.100" />
        </Pic>
      </div>
      <div className="h-[60px] shrink-0 bg-[#c8c8c8]">
        <Fit w={196} c="text-[39px] leading-[51px]">打刻メニュー</Fit>
      </div>
      <Fit w={142} c="ml-[319px] mt-[12px] text-[21px] leading-[30px]">08月25日(木)</Fit>
      <Fit w={439} c="ml-[169px] mt-[16px] font-['DejaVu_Sans',sans-serif] text-[92px] font-bold leading-[108px]">20:14:17</Fit>
      <div className="mx-[12px] mt-[2px] h-[59px] w-[755px] shrink-0 border border-b-2 border-r-2 border-white">
        <div className="relative flex h-[56px] w-[753px] border border-t-2 border-[#a0a0a0]">
          <div className="absolute -top-[15px] left-[12px] bg-[#f0f0f0] px-[7px]">
            <Fit w={99} c="text-[20px] leading-[28px]">ユーザ情報</Fit>
          </div>
          <Fit w={48} c="ml-[109px] mt-[13px] text-[23px] font-bold leading-[30px]">氏名</Fit>
          <Fit w={112} c="ml-[250px] mt-[18px] font-['DejaVu_Sans',sans-serif] text-[26px] leading-[32px]">satohiro</Fit>
        </div>
      </div>
      <div className="ml-[60px] mt-[25px] grid w-[660px] shrink-0 grid-cols-[300px_300px] gap-x-[60px] gap-y-[24px] text-[35px] leading-[50px]">
        <div className={face + "h-[84px] bg-[#f0f0f0] pt-[2px]"}><Fit w={72}>出勤</Fit></div>
        <div className={face + "h-[84px] bg-[#e3e3e3] pt-[2px]"}><Fit w={72}>退勤</Fit></div>
        <div className={face + "h-[84px] bg-[#e3e3e3] pt-[2px]"}><Fit w={134}>休憩入り</Fit></div>
        <div className={face + "h-[84px] bg-[#e3e3e3] pt-[2px]"}><Fit w={134}>休憩戻り</Fit></div>
      </div>
      <div className="mt-auto flex h-[88px] shrink-0 items-start bg-[#646464] pt-[24px] text-[18px] leading-[30px]">
        <div className={face + "ml-[384px] h-[47px] w-[107px] bg-[#f0f0f0] text-[#0000ff]"}>
          <Fit w={54}><span className="underline decoration-1 underline-offset-3">再認証</span></Fit>
        </div>
        <div className={face + "ml-[13px] h-[47px] w-[131px] bg-[#f0f0f0]"}><Fit w={109}>パスワード変更</Fit></div>
        <div className="ml-[13px] h-[48px] w-[120px] border border-black">
          <div className={face + "h-[46px] bg-[#f0f0f0]"}>
            <div className="flex h-[38px] w-[110px] items-center justify-center border border-dotted border-black"><Fit w={90}>メインメニュー</Fit></div>
          </div>
        </div>
      </div>
    </div>
  );
}

export default function App() {
  return (
    <div className="relative flex h-[1017px] w-[1920px] flex-col overflow-hidden bg-[#e6e6e6] font-['Noto_Sans','Noto_Sans_CJK_JP',sans-serif]">
      <Header />
      <Ribbon />
      <FormulaBar />
      <div className="flex h-[649px] shrink-0">
        <Sheet />
        <VScroll />
      </div>
      <BottomBar />
      <StatusBar />
      <Dialog />
    </div>
  );
}
